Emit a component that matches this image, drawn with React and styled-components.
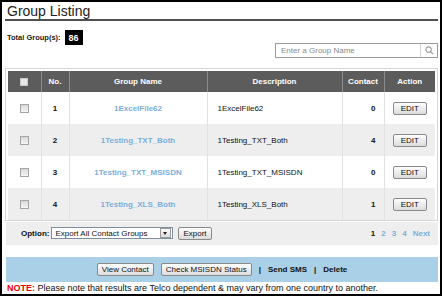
import styled, { createGlobalStyle } from 'styled-components';

const GlobalStyle = createGlobalStyle`
  body {
    margin: 0;
    font-family: 'Liberation Sans', Arial, sans-serif;
    background: #fff;
  }
`;

const groups = [
  { no: 1, name: '1ExcelFile62', contact: 0 },
  { no: 2, name: '1Testing_TXT_Both', contact: 4 },
  { no: 3, name: '1Testing_TXT_MSISDN', contact: 0 },
  { no: 4, name: '1Testing_XLS_Both', contact: 1 },
];

function SearchIcon() {
  return (
    <svg width="9" height="9" viewBox="0 0 10 10">
      <circle cx="4" cy="4" r="3" fill="none" stroke="#9a9a9a" strokeWidth="1.2" />
      <line x1="6.2" y1="6.2" x2="9" y2="9" stroke="#9a9a9a" strokeWidth="1.4" />
    </svg>
  );
}

export default function App() {
  return (
    <Frame>
      <GlobalStyle />
      <Title>Group Listing</Title>
      <TopBar>
        <Total>
          Total Group(s):
          <Badge>86</Badge>
        </Total>
        <Search>
          <SearchInput placeholder="Enter a Group Name" />
          <SearchButton>
            <SearchIcon />
          </SearchButton>
        </Search>
      </TopBar>

      <TableBox>
        <Table>
          <colgroup>
            <col style={{ width: 33 }} />
            <col style={{ width: 28 }} />
            <col style={{ width: 138 }} />
            <col style={{ width: 135 }} />
            <col style={{ width: 42 }} />
            <col style={{ width: 51 }} />
          </colgroup>
          <thead>
            <tr>
              <Th>
                <Check header />
              </Th>
              <Th>No.</Th>
              <Th>Group Name</Th>
              <Th>Description</Th>
              <Th>Contact</Th>
              <Th>Action</Th>
            </tr>
          </thead>
          <tbody>
            {groups.map((g) => (
              <Row key={g.no} alt={g.no % 2 === 0}>
                <Td>
                  <Check />
                </Td>
                <Td bold>{g.no}</Td>
                <Td>
                  <GroupLink>{g.name}</GroupLink>
                </Td>
                <Td align="left" pad="10px">
                  {g.name}
                </Td>
                <Td align="right" pad="8px" bold>
                  {g.contact}
                </Td>
                <Td>
                  <Button wide>EDIT</Button>
                </Td>
              </Row>
            ))}
          </tbody>
        </Table>
      </TableBox>

      <OptionBar>
        <OptionLabel>Option:</OptionLabel>
        <Select>
          <span>Export All Contact Groups</span>
          <SelectArrow />
        </Select>
        <Button>Export</Button>
        <Pager>
          <PageLink current>1</PageLink>
          <PageLink>2</PageLink>
          <PageLink>3</PageLink>
          <PageLink>4</PageLink>
          <PageLink>Next</PageLink>
        </Pager>
      </OptionBar>

      <ActionBar>
        <Button>View Contact</Button>
        <Button>Check MSISDN Status</Button>
        <ActionText>|</ActionText>
        <ActionText>Send SMS</ActionText>
        <ActionText>|</ActionText>
        <ActionText>Delete</ActionText>
      </ActionBar>

      <Note>
        <NoteLabel>NOTE:</NoteLabel> Please note that results are Telco dependent &amp; may vary
        from one country to another.
      </Note>
    </Frame>
  );
}

const Frame = styled.div`
  width: 442px;
  height: 296px;
  box-sizing: border-box;
  border: 2px solid #000;
  padding: 0 2px 0 3px;
  display: flex;
  flex-direction: column;
  font-size: 8px;
  color: #111;
`;

const Title = styled.h1`
  margin: 0;
  padding: 1px 0 0 2px;
  height: 16px;
  line-height: 16px;
  font-size: 14px;
  font-weight: normal;
  color: #222;
  border-bottom: 2px solid #505050;
`;

const TopBar = styled.div`
  display: flex;
  justify-content: space-between;
  align-items: flex-start;
  height: 48px;
`;

const Total = styled.div`
  display: flex;
  align-items: center;
  gap: 4px;
  margin: 9px 0 0 2px;
  font-size: 7.5px;
  font-weight: bold;
  color: #222;
`;

const Badge = styled.span`
  display: inline-flex;
  align-items: center;
  justify-content: center;
  width: 18px;
  height: 15px;
  background: #000;
  color: #fff;
  font-size: 9px;
  font-weight: bold;
`;

const Search = styled.div`
  display: flex;
  width: 163px;
  height: 15px;
  margin-top: 22px;
  box-sizing: border-box;
  border: 1px solid #9a9a9a;
  background: #fff;
`;

const SearchInput = styled.input`
  flex: 1;
  min-width: 0;
  border: none;
  outline: none;
  padding: 0 5px;
  font-family: inherit;
  font-size: 8px;
  color: #333;
  &::placeholder {
    color: #8a8a8a;
  }
`;

const SearchButton = styled.span`
  width: 16px;
  display: flex;
  align-items: center;
  justify-content: center;
  border-left: 1px solid #d4d4d4;
`;

const TableBox = styled.div`
  border: 1px solid #d6d6d6;
  padding: 2px 2px 0 2px;
`;

const Table = styled.table`
  width: 427px;
  border-collapse: collapse;
  table-layout: fixed;
`;

const Th = styled.th`
  height: 21px;
  padding: 0;
  background: #5c5c5c;
  color: #fff;
  font-size: 8px;
  font-weight: bold;
  text-align: center;
  border-left: 1px solid #8c8c8c;
  &:first-child {
    border-left: none;
  }
`;

const Row = styled.tr`
  background: ${(p) => (p.alt ? '#eeeeee' : '#ffffff')};
`;

const Td = styled.td`
  height: 32px;
  padding: 0 ${(p) => p.pad || '0'};
  text-align: ${(p) => p.align || 'center'};
  font-weight: ${(p) => (p.bold ? 'bold' : 'normal')};
  font-size: 8px;
  color: #111;
  border-left: 1px solid #e2e2e2;
  &:first-child {
    border-left: none;
  }
`;

const Check = styled.span`
  display: inline-block;
  vertical-align: middle;
  width: ${(p) => (p.header ? '8px' : '9px')};
  height: ${(p) => (p.header ? '8px' : '9px')};
  box-sizing: border-box;
  border: 1px solid ${(p) => (p.header ? '#c8c8c8' : '#a4a4a4')};
  background: ${(p) =>
    p.header ? '#e8e8e8' : 'linear-gradient(#d8d8d8, #f6f6f6)'};
`;

const GroupLink = styled.span`
  color: #7aaedb;
  font-weight: bold;
`;

const Button = styled.span`
  display: inline-flex;
  align-items: center;
  justify-content: center;
  height: 13px;
  padding: 0 ${(p) => (p.wide ? '7px' : '4px')};
  box-sizing: border-box;
  border: 1px solid #8a8a8a;
  border-radius: 2px;
  background: linear-gradient(#fdfdfd, #dcdcdc);
  color: #111;
  font-size: 8px;
  white-space: nowrap;
`;

const OptionBar = styled.div`
  display: flex;
  align-items: center;
  gap: 5px;
  height: 23px;
  margin: 1px 0 0 1px;
  padding: 0 8px 0 15px;
  background: #eeeeee;
`;

const OptionLabel = styled.span`
  font-weight: bold;
  margin-right: -3px;
`;

const Select = styled.span`
  display: flex;
  align-items: center;
  justify-content: space-between;
  width: 122px;
  height: 12px;
  box-sizing: border-box;
  padding-left: 3px;
  border: 1px solid #7f8f9f;
  background: #fff;
  font-size: 8px;
`;

const SelectArrow = styled.span`
  position: relative;
  width: 9px;
  height: 8px;
  margin-right: 1px;
  border: 1px solid #9a9a9a;
  background: linear-gradient(#fafafa, #dedede);
  &::after {
    content: '';
    position: absolute;
    left: 2px;
    top: 3px;
    border-left: 2.5px solid transparent;
    border-right: 2.5px solid transparent;
    border-top: 3px solid #222;
  }
`;

const Pager = styled.div`
  margin-left: auto;
  display: flex;
  gap: 6px;
  font-weight: bold;
`;

const PageLink = styled.span`
  color: ${(p) => (p.current ? '#111' : '#7aaedb')};
`;

const ActionBar = styled.div`
  display: flex;
  align-items: center;
  justify-content: center;
  gap: 7px;
  height: 26px;
  margin: 12px 0 0 1px;
  background: #aad0e7;
`;

const ActionText = styled.span`
  font-weight: bold;
  font-size: 8px;
  color: #111;
`;

const Note = styled.div`
  margin: 1px 0 0 2px;
  font-size: 9px;
  line-height: 11px;
  color: #111;
`;

const NoteLabel = styled.span`
  color: #e00;
  font-weight: bold;
`;
